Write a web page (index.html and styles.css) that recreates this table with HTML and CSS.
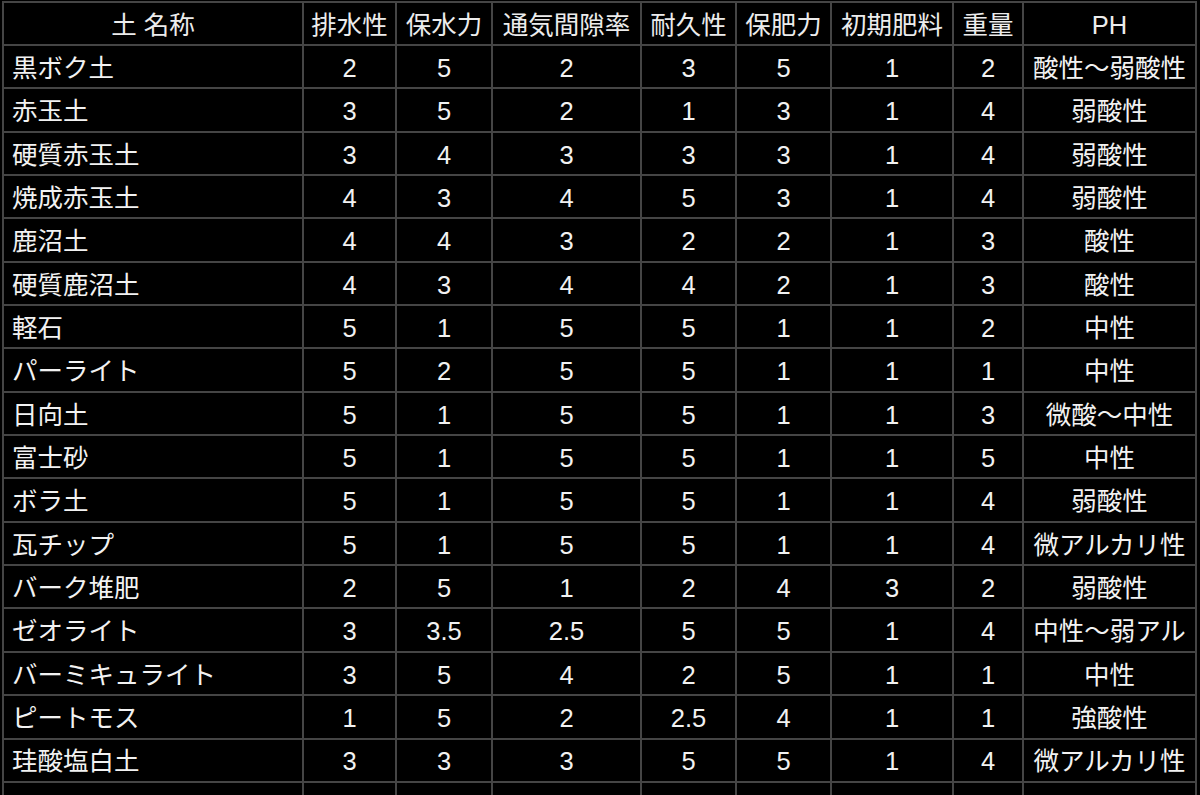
FILE: index.html
```html
<!DOCTYPE html>
<html lang="ja">
<head>
<meta charset="utf-8">
<title>土の性質</title>
<link rel="stylesheet" href="styles.css">
</head>
<body>
<table class="soil">
  <thead>
    <tr>
      <th class="c1">土 名称</th>
      <th class="c2">排水性</th>
      <th class="c3">保水力</th>
      <th class="c4">通気間隙率</th>
      <th class="c5">耐久性</th>
      <th class="c6">保肥力</th>
      <th class="c7">初期肥料</th>
      <th class="c8">重量</th>
      <th class="c9">PH</th>
    </tr>
  </thead>
  <tbody>
    <tr><td class="name">黒ボク土</td><td>2</td><td>5</td><td>2</td><td>3</td><td>5</td><td>1</td><td>2</td><td>酸性～弱酸性</td></tr>
    <tr><td class="name">赤玉土</td><td>3</td><td>5</td><td>2</td><td>1</td><td>3</td><td>1</td><td>4</td><td>弱酸性</td></tr>
    <tr><td class="name">硬質赤玉土</td><td>3</td><td>4</td><td>3</td><td>3</td><td>3</td><td>1</td><td>4</td><td>弱酸性</td></tr>
    <tr><td class="name">焼成赤玉土</td><td>4</td><td>3</td><td>4</td><td>5</td><td>3</td><td>1</td><td>4</td><td>弱酸性</td></tr>
    <tr><td class="name">鹿沼土</td><td>4</td><td>4</td><td>3</td><td>2</td><td>2</td><td>1</td><td>3</td><td>酸性</td></tr>
    <tr><td class="name">硬質鹿沼土</td><td>4</td><td>3</td><td>4</td><td>4</td><td>2</td><td>1</td><td>3</td><td>酸性</td></tr>
    <tr><td class="name">軽石</td><td>5</td><td>1</td><td>5</td><td>5</td><td>1</td><td>1</td><td>2</td><td>中性</td></tr>
    <tr><td class="name">パーライト</td><td>5</td><td>2</td><td>5</td><td>5</td><td>1</td><td>1</td><td>1</td><td>中性</td></tr>
    <tr><td class="name">日向土</td><td>5</td><td>1</td><td>5</td><td>5</td><td>1</td><td>1</td><td>3</td><td>微酸～中性</td></tr>
    <tr><td class="name">富士砂</td><td>5</td><td>1</td><td>5</td><td>5</td><td>1</td><td>1</td><td>5</td><td>中性</td></tr>
    <tr><td class="name">ボラ土</td><td>5</td><td>1</td><td>5</td><td>5</td><td>1</td><td>1</td><td>4</td><td>弱酸性</td></tr>
    <tr><td class="name">瓦チップ</td><td>5</td><td>1</td><td>5</td><td>5</td><td>1</td><td>1</td><td>4</td><td>微アルカリ性</td></tr>
    <tr><td class="name">バーク堆肥</td><td>2</td><td>5</td><td>1</td><td>2</td><td>4</td><td>3</td><td>2</td><td>弱酸性</td></tr>
    <tr><td class="name">ゼオライト</td><td>3</td><td>3.5</td><td>2.5</td><td>5</td><td>5</td><td>1</td><td>4</td><td>中性～弱アル</td></tr>
    <tr><td class="name">バーミキュライト</td><td>3</td><td>5</td><td>4</td><td>2</td><td>5</td><td>1</td><td>1</td><td>中性</td></tr>
    <tr><td class="name">ピートモス</td><td>1</td><td>5</td><td>2</td><td>2.5</td><td>4</td><td>1</td><td>1</td><td>強酸性</td></tr>
    <tr><td class="name">珪酸塩白土</td><td>3</td><td>3</td><td>3</td><td>5</td><td>5</td><td>1</td><td>4</td><td>微アルカリ性</td></tr>
    <tr><td class="name"></td><td></td><td></td><td></td><td></td><td></td><td></td><td></td><td></td></tr>
  </tbody>
</table>
</body>
</html>
```

FILE: styles.css
```css
html, body {
  margin: 0;
  padding: 0;
  background: #000;
  overflow: hidden;
}

.soil {
  margin: 1px 0 0 2px;
  border-collapse: separate;
  border-spacing: 0;
  table-layout: fixed;
  width: 1195px;
  border-left: 2px solid #454545;
  border-top: 2px solid #454545;
  font-family: "Liberation Sans", "Noto Sans CJK JP", sans-serif;
  font-size: 25.5px;
  color: #f2f2f2;
}

.soil th,
.soil td {
  box-sizing: border-box;
  border-right: 2px solid #454545;
  border-bottom: 2px solid #454545;
  padding: 4px 0 0 0;
  text-align: center;
  vertical-align: middle;
  white-space: nowrap;
  overflow: hidden;
  font-weight: normal;
  line-height: 1;
}

.soil th {
  height: 43px;
  padding-top: 5px;
  color: #ececec;
}

.soil td {
  height: 43.35px;
}

.soil td.name {
  text-align: left;
  padding-left: 8px;
}

.c1 { width: 300px; }
.c2 { width: 93px; }
.c3 { width: 96px; }
.c4 { width: 149px; }
.c5 { width: 95px; }
.c6 { width: 95px; }
.c7 { width: 122px; }
.c8 { width: 70px; }
.c9 { width: 173px; }
```
